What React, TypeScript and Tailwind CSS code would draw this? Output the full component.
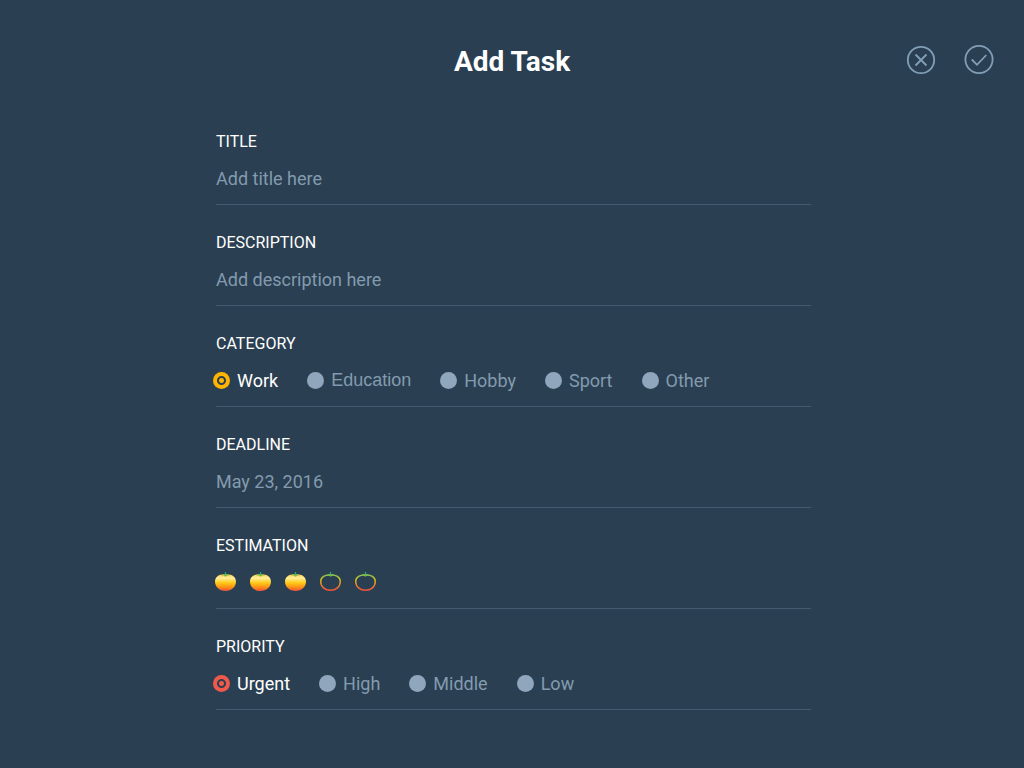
import { useState, type ReactNode } from "react";

const ratings = [1, 2, 3, 4, 5];

const inputClass =
  "mt-[11px] h-7 w-full bg-transparent p-0 text-lg leading-7 text-[#829bae] outline-none placeholder:text-[#829bae] placeholder:opacity-100";

const labelClass = "block text-base leading-6 text-white";

const radioClass = "size-[17px] shrink-0 appearance-none rounded-full bg-[#8fa6bc]";

const amberDot =
  "checked:bg-[radial-gradient(circle,#ffb400_0,#ffb400_2px,#2b3f52_3px,#2b3f52_4px,#ffb400_5px)]";

const redDot =
  "checked:bg-[radial-gradient(circle,#f15a4a_0,#f15a4a_2px,#2b3f52_3px,#2b3f52_4px,#f15a4a_5px)]";

function Tomato({ filled }: { filled: boolean }) {
  return (
    <svg viewBox="0 0 21 19" className="h-[19px] w-[21px]" aria-hidden="true">
      <defs>
        <linearGradient id="tomatoFill" x1="0" y1="0" x2="0" y2="1">
          <stop offset="0" stopColor="#ffc83c" />
          <stop offset="0.22" stopColor="#fff0a0" />
          <stop offset="0.5" stopColor="#ffcb1c" />
          <stop offset="0.75" stopColor="#ff9614" />
          <stop offset="1" stopColor="#f4523a" />
        </linearGradient>
        <linearGradient id="tomatoLine" x1="0" y1="0" x2="0" y2="1">
          <stop offset="0" stopColor="#8cc152" />
          <stop offset="0.25" stopColor="#d0c81f" />
          <stop offset="0.6" stopColor="#ee8d22" />
          <stop offset="1" stopColor="#f4523a" />
        </linearGradient>
      </defs>
      {filled ? (
        <path
          d="M10.500 2.300C4.500 1.800 0 4.600 0 9.600C0 15.200 4.600 19 10.500 19S21 15.200 21 9.600C21 4.600 16.500 1.800 10.500 2.300Z"
          fill="url(#tomatoFill)"
        />
      ) : (
        <path
          d="M10.500 3C5 2.500 .7 5 .7 9.600C.7 14.800 5 18.300 10.500 18.300S20.300 14.800 20.300 9.600C20.300 5 16 2.500 10.500 3Z"
          fill="none"
          stroke="url(#tomatoLine)"
          strokeWidth="1.400"
        />
      )}
      <path
        d="M10.500 2C12.200 1.900 13.600 2.300 14.700 3.200L12.400 3.500L10.500 4.700L8.600 3.500L6.300 3.200C7.400 2.300 8.800 1.900 10.500 2Z"
        fill="#7fb84e"
      />
      <path d="M10.500 0V2.700" stroke="#27ae76" strokeWidth="1.300" />
    </svg>
  );
}

function Field({ children }: { children: ReactNode }) {
  return <div className="h-[101px] border-b border-[#435b6e] pt-[26px]">{children}</div>;
}

type GroupProps = {
  legend: string;
  name: string;
  options: { label: string; className?: string }[];
  initial: string;
  dotClass: string;
};

function RadioGroup({ legend, name, options, initial, dotClass }: GroupProps) {
  const [value, setValue] = useState(initial);
  return (
    <Field>
      <fieldset>
        <legend className={labelClass}>{legend}</legend>
        <div className="mt-[11px] -ml-[3px] flex flex-wrap gap-x-[29px]">
          {options.map(({ label, className = "" }) => (
            <label
              key={label}
              className={`flex items-center gap-[7px] text-lg leading-[27px] text-[#829bae] has-checked:text-white ${className}`}
            >
              <input
                type="radio"
                name={name}
                checked={value === label}
                onChange={() => setValue(label)}
                className={`${radioClass} ${dotClass}`}
              />
              {label}
            </label>
          ))}
        </div>
      </fieldset>
    </Field>
  );
}

export default function App() {
  const [estimation, setEstimation] = useState(3);
  const [deadline, setDeadline] = useState("May 23, 2016");

  return (
    <form
      className="min-h-screen bg-[#2b3f52] font-[Roboto,sans-serif]"
      onSubmit={(event) => event.preventDefault()}
    >
      <header className="grid grid-cols-[1fr_auto_1fr] items-center px-[30px] pt-10">
        <h1 className="col-start-2 pt-1 text-[28px] leading-9 font-bold text-white">Add Task</h1>
        <div className="flex justify-end gap-7 text-[#829fb6]">
          <button type="button" aria-label="Cancel">
            <svg viewBox="0 0 30 30" className="size-[30px]" fill="none" stroke="currentColor" strokeWidth="1.800">
              <circle cx="15" cy="15" r="13.200" />
              <path d="M9.500 9.500L20.500 20.500M20.500 9.500L9.500 20.500" />
            </svg>
          </button>
          <button type="submit" aria-label="Save">
            <svg viewBox="0 0 30 30" className="size-[30px]" fill="none" stroke="currentColor" strokeWidth="1.800">
              <circle cx="15" cy="14.500" r="13.600" />
              <path d="M7.800 14.500L13 19.800L22.300 10" />
            </svg>
          </button>
        </div>
      </header>

      <main className="pt-6 pr-[213px] pb-8 pl-[216px]">
        <Field>
          <label htmlFor="title" className={labelClass}>TITLE</label>
          <input id="title" type="text" placeholder="Add title here" className={inputClass} />
        </Field>
        <Field>
          <label htmlFor="description" className={labelClass}>DESCRIPTION</label>
          <input id="description" type="text" placeholder="Add description here" className={inputClass} />
        </Field>
        <RadioGroup
          legend="CATEGORY"
          name="category"
          options={[
            { label: "Work" },
            { label: "Education", className: "font-['Liberation_Sans',sans-serif]" },
            { label: "Hobby" },
            { label: "Sport" },
            { label: "Other" },
          ]}
          initial="Work"
          dotClass={amberDot}
        />
        <Field>
          <label htmlFor="deadline" className={labelClass}>DEADLINE</label>
          <input
            id="deadline"
            type="text"
            value={deadline}
            onChange={(event) => setDeadline(event.target.value)}
            className={inputClass}
          />
        </Field>
        <Field>
          <h2 className={labelClass}>ESTIMATION</h2>
          <div className="mt-[11px] -ml-px flex h-[25px] items-center gap-3.5">
            {ratings.map((rating) => (
              <button
                key={rating}
                type="button"
                aria-label={String(rating)}
                aria-pressed={rating <= estimation}
                onClick={() => setEstimation(rating)}
              >
                <Tomato filled={rating <= estimation} />
              </button>
            ))}
          </div>
        </Field>
        <RadioGroup
          legend="PRIORITY"
          name="priority"
          options={[{ label: "Urgent" }, { label: "High" }, { label: "Middle" }, { label: "Low" }]}
          initial="Urgent"
          dotClass={redDot}
        />
      </main>
    </form>
  );
}
